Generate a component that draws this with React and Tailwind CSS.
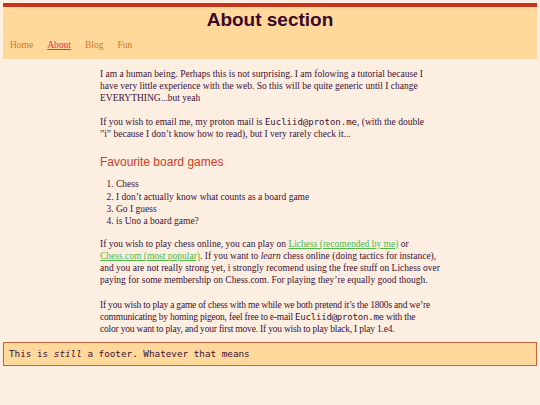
const serif = { fontFamily: '"Liberation Serif", "DejaVu Serif", serif' };

function Mono({ children }) {
  return <code className="font-['DejaVu_Sans_Mono',monospace] text-[9px]">{children}</code>;
}

export default function App() {
  return (
    <div className="min-h-screen bg-[#fdeee2] px-[3px] pt-[3px] pb-10 text-[#3b1231] font-['Liberation_Serif',serif]">
      <header className="border-t-4 border-[#c8341a] bg-[#ffd89c] pt-px pb-[8px]">
        <h1 className="text-center font-['Liberation_Sans',Arial,sans-serif] text-[19px] font-bold leading-[24px] text-[#3a0a2a]">
          About section
        </h1>
        <nav className="mt-[7px] flex gap-[14px] px-[7px] text-[9.5px] leading-[12px] text-[#cf7a2c]">
          <a href="#">Home</a>
          <a href="#" className="text-[#e8304a] underline">About</a>
          <a href="#">Blog</a>
          <a href="#">Fun</a>
        </nav>
      </header>

      <main className="mx-auto w-[340px] pt-[9px] text-[9.5px] leading-[12.1px]" style={serif}>
        <p>
          I am a human being. Perhaps this is not surprising. I am folowing a tutorial because I have very little
          experience with the web. So this will be quite generic until I change EVERYTHING...but yeah
        </p>
        <p className="mt-[12px]">
          If you wish to email me, my proton mail is <Mono>Eucliid@proton.me</Mono>, (with the double ”i”&nbsp;because
          I don’t know how to read), but I very rarely check it...
        </p>

        <h2 className="mt-[14px] font-['Liberation_Sans',Arial,sans-serif] text-[12px] leading-[16px] text-[#d0401e]">
          Favourite board games
        </h2>

        <ol className="mt-[8px] list-decimal pl-[16px]">
          <li>Chess</li>
          <li>I don’t actually know what counts as a board game</li>
          <li>Go I guess</li>
          <li>is Uno a board game?</li>
        </ol>

        <p className="mt-[11px]">
          If you wish to play chess online, you can play on{' '}
          <a href="#" className="text-[#4fb848] underline">Lichess (recomended by me)</a> or{' '}
          <a href="#" className="text-[#4fb848] underline">Chess.com (most popular)</a>. If you want to{' '}
          <em>learn</em> chess online (doing tactics for instance), and you are not really strong yet, i strongly
          recomend using the free stuff on Lichess over paying for some membership on Chess.com. For playing they’re
          equally good though.
        </p>
        <p className="mt-[13px] tracking-[-0.2px]">
          If you wish to play a game of chess with me while we both pretend it’s the 1800s and we’re communicating by
          homing pigeon, feel free to e-mail <Mono>Eucliid@proton.me</Mono> with the color&nbsp;you want to play, and
          your first move. If you wish to play black, I play 1.e4.
        </p>
      </main>

      <footer className="mt-[6px] border border-[#c8643c] bg-[#ffd89c] px-[5px] py-[5px] font-['DejaVu_Sans_Mono',monospace] text-[9.3px] leading-[12px]">
        This is <em>still</em> a footer. Whatever that means
      </footer>
    </div>
  );
}
